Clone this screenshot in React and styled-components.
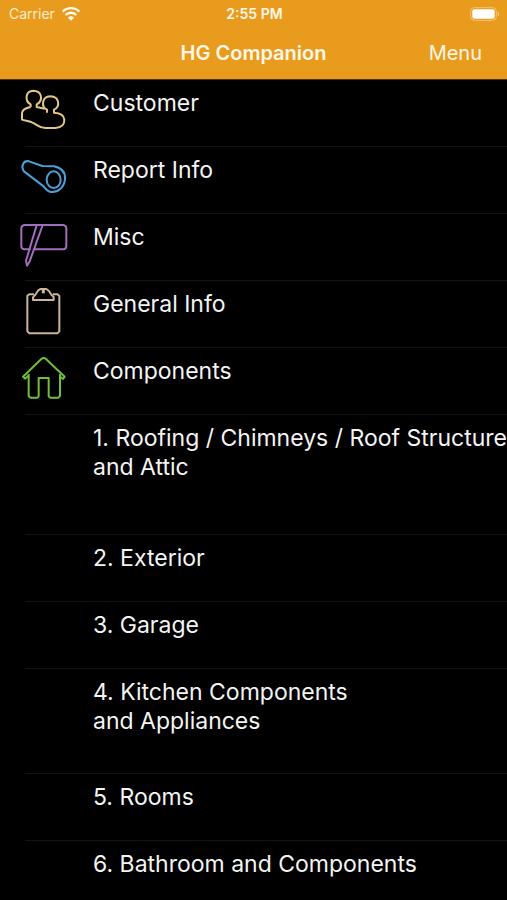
import React from "react";
import styled, { createGlobalStyle } from "styled-components";

const sections = [
  { id: "customer", label: "Customer", icon: CustomerIcon },
  { id: "report", label: "Report Info", icon: ReportIcon },
  { id: "misc", label: "Misc", icon: MiscIcon },
  { id: "general", label: "General Info", icon: ClipboardIcon },
  { id: "components", label: "Components", icon: HouseIcon },
  { id: "roofing", label: "1. Roofing / Chimneys / Roof Structure\nand Attic", size: "large" },
  { id: "exterior", label: "2. Exterior" },
  { id: "garage", label: "3. Garage" },
  { id: "kitchen", label: "4. Kitchen Components\nand Appliances", size: "medium" },
  { id: "rooms", label: "5. Rooms" },
  { id: "bathroom", label: "6. Bathroom and Components" },
];

const rowHeights = {
  large: 119,
  medium: 104,
  small: 66,
};

export default function App() {
  return (
    <>
      <GlobalStyle />
      <Screen>
        <Header>
          <StatusBar>
            <Carrier>
              Carrier
              <WifiIcon />
            </Carrier>
            <Time>2:55 PM</Time>
            <BatteryIcon />
          </StatusBar>
          <NavBar>
            <Title>HG Companion</Title>
            <MenuButton type="button">Menu</MenuButton>
          </NavBar>
        </Header>
        <List>
          {sections.map(({ id, label, icon: Icon, size }) => (
            <li key={id}>
              <Row type="button" $size={size || "small"}>
                <IconSlot>{Icon && <Icon />}</IconSlot>
                <Label>{label}</Label>
              </Row>
              <Divider />
            </li>
          ))}
        </List>
      </Screen>
    </>
  );
}

function WifiIcon() {
  return (
    <svg width="18" height="14" viewBox="0 0 54 42" fill="none" stroke="#fffaf0" strokeWidth="7" aria-hidden="true">
      <path d="M2 14C16 0 38 0 52 14" />
      <path d="M11 24C20 15 34 15 43 24" />
      <path d="M18 32C23 26 31 26 36 32L27 41Z" fill="#fffaf0" stroke="none" />
    </svg>
  );
}

function BatteryIcon() {
  return (
    <Battery viewBox="0 0 90 42" aria-label="Battery full" role="img">
      <rect x="2" y="2" width="77" height="38" rx="11" fill="none" stroke="#f3c477" strokeWidth="3" />
      <rect x="7" y="7" width="67" height="28" rx="6" fill="#fff" />
      <path d="M83 14C89 16 89 26 83 28Z" fill="#f3c477" />
    </Battery>
  );
}

function CustomerIcon() {
  return (
    <Glyph viewBox="30 21 144 144" stroke="#e3c687">
      <path d="M62 81V73C44 64 45 33 70 32C96 32 101 62 80 73V81L104 86" />
      <path d="M62 81C47 84 37 90 36 99V119C45 123 58 122 70 129C84 136 88 143 106 144H136C157 142 164 134 163 119C162 105 151 99 132 98V89C151 80 149 50 121 49C96 50 92 80 111 89V98" />
    </Glyph>
  );
}

function ReportIcon() {
  return (
    <Glyph viewBox="30 18 144 144" stroke="#4c9fd8">
      <path d="M57 40L97 54L132 55C155 60 167 74 165 94C162 119 144 134 123 132C112 130 107 123 101 115L42 70C32 55 40 36 57 40Z" />
      <ellipse cx="131" cy="95" rx="21" ry="25" />
    </Glyph>
  );
}

function MiscIcon() {
  return (
    <Glyph viewBox="30 18 144 144" stroke="#a36dbd">
      <path d="M62 103H43Q34 102 34 94V39Q35 31 43 30H160Q168 31 169 39V94Q168 102 160 103H71" />
      <path d="M80 31L48 137L51 152L59 139L97 33" />
    </Glyph>
  );
}

function ClipboardIcon() {
  return (
    <Glyph viewBox="30 24 144 144" stroke="#ccb39b">
      <path d="M72 43H57L52 48V154L58 160H142L148 154V48L143 43H128" />
      <path d="M69 60V52L77 43L84 32L91 27H109L117 33L123 43L131 51V60Z" />
      <path d="M100 28V40" strokeWidth="9" />
    </Glyph>
  );
}

function HouseIcon() {
  return (
    <Glyph viewBox="30 30 144 144" stroke="#70bf3c">
      <path d="M55 92L46 101L39 95L94 42Q101 36 108 42L164 95L159 102L149 94" />
      <path d="M56 87V153L61 158H82L86 154V99H116V154L121 158H145L150 153V87" />
    </Glyph>
  );
}

const GlobalStyle = createGlobalStyle`
  * {
    box-sizing: border-box;
  }
  body {
    margin: 0;
    background: #000;
    font-family: Inter, "Liberation Sans", sans-serif;
  }
  button {
    border: 0;
    background: none;
    font: inherit;
    cursor: pointer;
  }
`;

const Screen = styled.main`
  display: flex;
  flex-direction: column;
  height: 100vh;
  background: #000;
  color: #f4f4f4;
`;

const Header = styled.header`
  flex: none;
  background: #e99b1e;
  border-bottom: 1px solid #4f3206;
  color: #fff8e8;
`;

const StatusBar = styled.div`
  display: grid;
  grid-template-columns: 1fr auto 1fr;
  align-items: center;
  height: 27px;
  padding: 0 7px 0 9px;
  font-size: 14px;
`;

const Carrier = styled.span`
  display: flex;
  align-items: center;
  gap: 7px;
  color: #ffedcc;
`;

const Time = styled.time`
  font-weight: 600;
`;

const Battery = styled.svg`
  justify-self: end;
  width: 30px;
  height: 14px;
`;

const NavBar = styled.nav`
  display: grid;
  grid-template-columns: 1fr auto 1fr;
  align-items: center;
  height: 52px;
  padding: 0 25px;
`;

const Title = styled.h1`
  grid-column: 2;
  margin: 0;
  font-size: 20px;
  font-weight: 600;
`;

const MenuButton = styled.button`
  justify-self: end;
  padding: 0;
  color: inherit;
  && {
    font-size: 20px;
  }
`;

const List = styled.ul`
  flex: 1;
  min-height: 0;
  margin: 0;
  padding: 0;
  list-style: none;
  overflow-y: auto;
  scrollbar-width: none;
`;

const Row = styled.button`
  display: flex;
  align-items: flex-start;
  gap: 25px;
  width: 100%;
  min-height: ${({ $size }) => rowHeights[$size]}px;
  padding: 7px 0 0 20px;
  color: inherit;
  text-align: left;
`;

const IconSlot = styled.span`
  flex: none;
  width: 48px;
  height: 48px;
`;

const Glyph = styled.svg.attrs({ "aria-hidden": true })`
  display: block;
  width: 48px;
  height: 48px;
  overflow: visible;
  fill: none;
  stroke-width: 6;
  stroke-linejoin: round;
`;

const Label = styled.span`
  padding-top: 2px;
  font-size: 23px;
  line-height: 29px;
  white-space: pre-line;
`;

const Divider = styled.div`
  height: 1px;
  margin-left: 25px;
  background: #141414;
`;
